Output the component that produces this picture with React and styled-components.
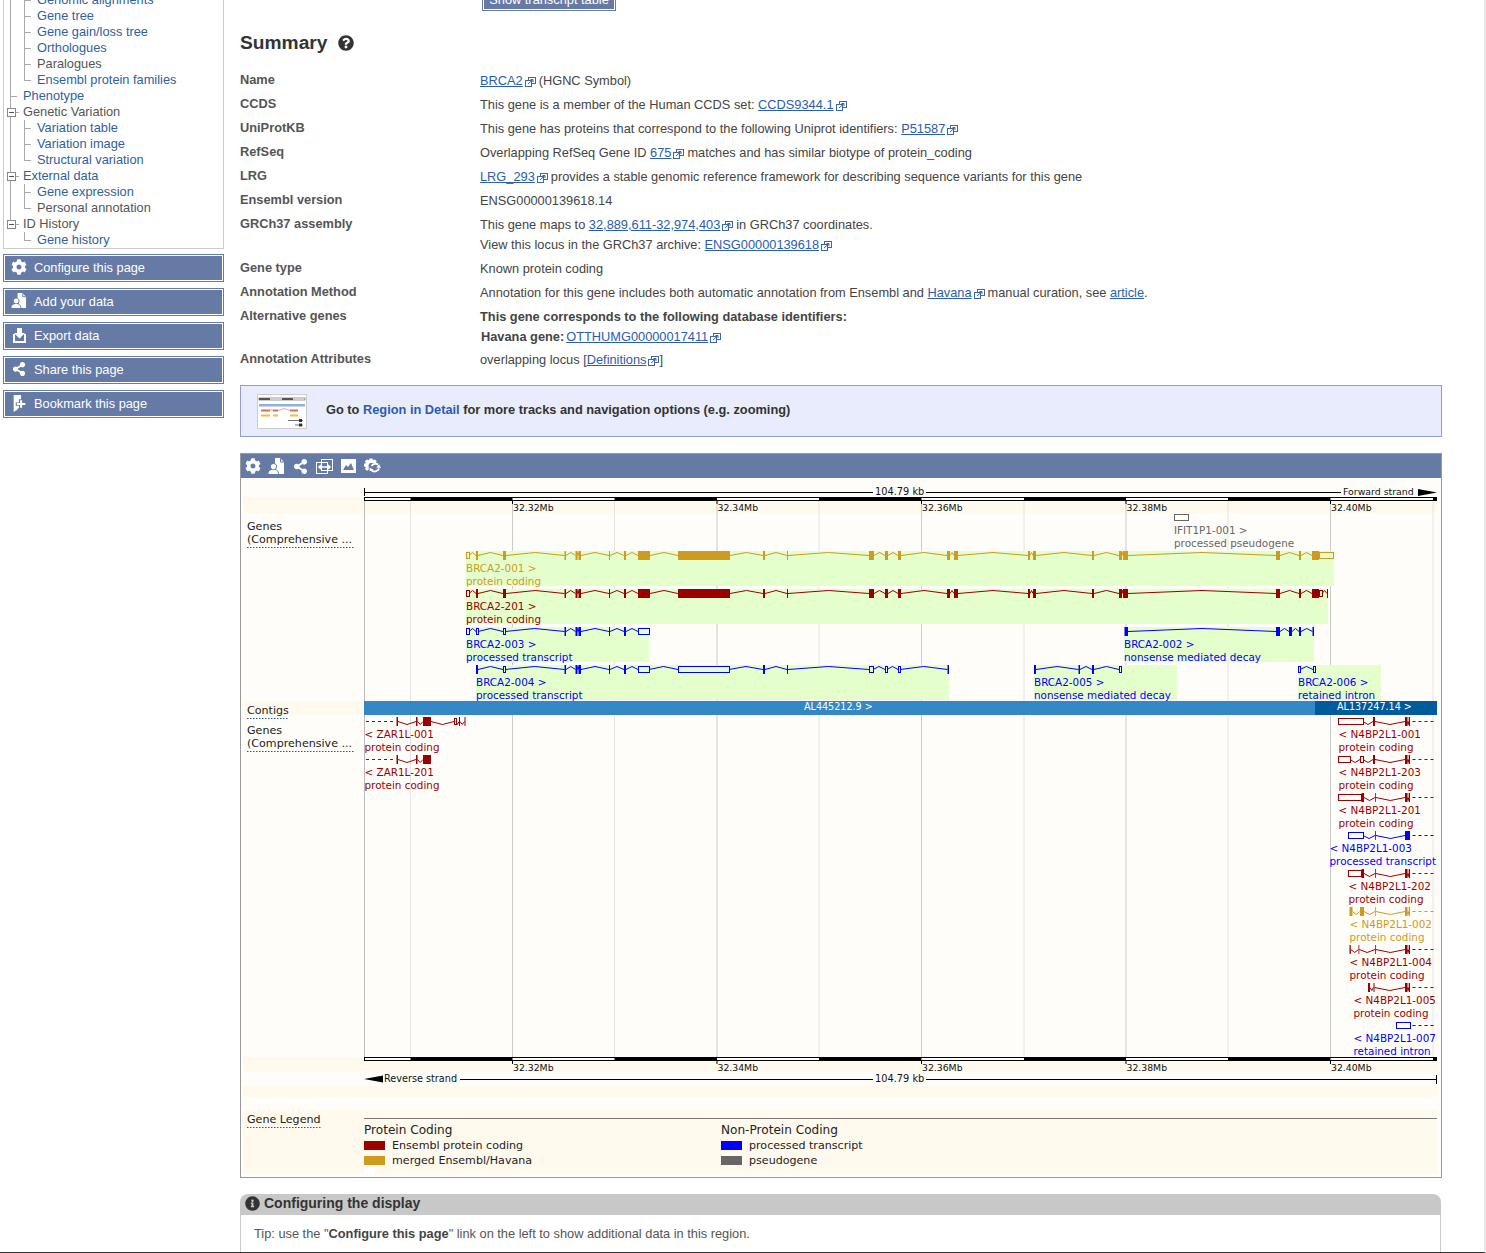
import React from "react";
import styled, { createGlobalStyle, css } from "styled-components";
import { FaCog, FaShareAlt, FaQuestionCircle, FaInfoCircle } from "react-icons/fa";

const GlobalStyle = createGlobalStyle`
  html, body { margin: 0; padding: 0; background: #fff; }
  body { font-family: "Liberation Sans", Arial, sans-serif; color: #444; }
`;

const LINK = "#2a5db0";
const TREE = "#a8a8a8";

const Page = styled.div`
  width: 1484px;
  height: 1252px;
  overflow: hidden;
  display: flex;
  align-items: flex-start;
  border-right: 2px solid #e6e6e6;
  border-bottom: 1px solid #333;
`;

const Sidebar = styled.aside`
  width: 221px;
  margin-left: 3px;
  flex: none;
`;

const TreePanel = styled.div`
  margin: -8px 0 -1px;
  border: 1px solid #ccc;
  border-top: 0;
`;

const lineV = (x, h = "100%") => `linear-gradient(${TREE}, ${TREE}) ${x}px 0 / 1px ${h} no-repeat`;
const lineH = (x, w = 7) => `linear-gradient(${TREE}, ${TREE}) ${x}px 8px / ${w}px 1px no-repeat`;

const TreeRow = styled.div`
  height: 16px;
  display: flex;
  align-items: center;
  font-size: 12.8px;
  line-height: 16px;
  white-space: nowrap;
  color: ${(p) => (p.$link ? "#2f5f9e" : "#555")};
  padding-left: ${(p) => (p.$toggle ? 3 : p.$level === 2 ? 33 : 19)}px;
  ${(p) => {
    const bits = [];
    if (p.$level === 1) {
      bits.push(lineV(6, p.$end ? "8px" : "100%"));
      if (!p.$toggle) bits.push(lineH(6));
    } else {
      if (p.$trunk) bits.push(lineV(6));
      bits.push(lineV(20, p.$last ? "8px" : "100%"), lineH(20));
    }
    return css`background: ${bits.join(", ")};`;
  }}
`;

const Toggle = styled.span`
  width: 7px;
  height: 7px;
  margin-right: 7px;
  border: 1px solid #888;
  background: linear-gradient(#555, #555) center / 5px 1px no-repeat, #fff;
  position: relative;
  &::after {
    content: "";
    position: absolute;
    left: 8px;
    top: 3px;
    width: 3px;
    height: 1px;
    background: ${TREE};
  }
`;

const SideButton = styled.div`
  height: 24px;
  padding-bottom: 2px;
  margin-top: 6px;
  display: flex;
  align-items: center;
  background: #667aa6;
  border: 1px solid #667aa6;
  box-shadow: inset 0 0 0 1px #fff;
  color: #fff;
  font-size: 12.8px;
  white-space: nowrap;
`;

const ButtonIcon = styled.span`
  width: 30px;
  display: flex;
  justify-content: center;
  color: #fff;
`;

const Main = styled.main`
  width: 1202px;
  margin-left: 16px;
  flex: none;
`;

const TopButton = styled.div`
  width: 132px;
  height: 27px;
  margin: -18px 0 0 242px;
  background: #667aa6;
  border: 1px solid #667aa6;
  box-shadow: inset 0 0 0 1px #fff;
  color: #fff;
  font-size: 12.8px;
  text-align: center;
  line-height: 34px;
`;

const Heading = styled.h2`
  margin: 20px 0 16px;
  height: 24px;
  display: flex;
  align-items: center;
  gap: 11px;
  font-size: 19.2px;
  font-weight: bold;
  color: #333;
  line-height: 24px;
`;

const InfoRow = styled.div`
  display: grid;
  grid-template-columns: 240px 1fr;
  padding-bottom: ${(p) => (p.$tight ? 3 : 4)}px;
  font-size: 12.8px;
  line-height: 20px;
`;

const RowLabel = styled.div`
  font-weight: bold;
  color: #555;
  margin-top: -1px;
`;

const RowLine = styled.div`
  color: #444;
  font-weight: ${(p) => (p.$bold ? "bold" : "normal")};
`;

const Link = styled.a`
  color: ${LINK};
  text-decoration: underline;
`;

const ExtIcon = styled.svg`
  width: 11px;
  height: 10px;
  margin: 0 3px 0 2px;
  vertical-align: -2px;
`;

const External = () => (
  <ExtIcon viewBox="0 0 11 10" fill="none" stroke="#3d66a8" strokeWidth="1">
    <rect x="3.5" y="0.5" width="7" height="6" fill="#fff" />
    <rect x="0.5" y="3.5" width="6" height="6" fill="#fff" />
    <path d="M3 7 L8 2.5 M5.5 2.5 H8 V5" />
  </ExtIcon>
);

const Ext = ({ children }) => (
  <>
    <Link>{children}</Link>
    <External />
  </>
);

const Closing = styled.span`
  margin-left: -3px;
`;

const Promo = styled.div`
  height: 50px;
  margin-top: 11px;
  display: flex;
  align-items: center;
  gap: 19px;
  padding-left: 16px;
  background: #e8ecfc;
  border: 1px solid #8ea0cb;
  font-size: 12.8px;
  font-weight: bold;
  color: #333;
`;

const PromoText = styled.span`
  margin-top: -4px;
`;

const Thumb = styled.svg`
  width: 50px;
  height: 35px;
  flex: none;
`;

const PromoLink = styled.span`
  color: ${LINK};
`;

const GenomePanel = styled.section`
  margin-top: 16px;
  border: 1px solid #999;
`;

const Toolbar = styled.div`
  height: 24px;
  display: flex;
  align-items: center;
  gap: 7px;
  padding-left: 3px;
  background: #667aa6;
  color: #fff;
`;

const ToolIcon = styled.span`
  width: 17px;
  display: flex;
  justify-content: center;
`;

const Track = styled.svg`
  display: block;
  width: 1200px;
  height: 699px;
`;

const Txt = styled.text`
  font-family: "DejaVu Sans", sans-serif;
  font-size: ${(p) => p.$size || 10.4}px;
`;

const ConfigPanel = styled.section`
  margin: 16px 1px 0 0;
`;

const ConfigHead = styled.div`
  height: 18px;
  padding: 0 0 3px 5px;
  display: flex;
  align-items: center;
  gap: 4px;
  background: #c8c8c8;
  border-radius: 8px 8px 0 0;
  font-size: 14px;
  font-weight: bold;
  color: #333;
`;

const ConfigBody = styled.div`
  border: 1px solid #ccc;
  border-top: 0;
  padding: 10px 13px 20px;
  font-size: 12.8px;
  line-height: 18px;
  color: #555;
`;

const Strong = styled.b`
  color: #444;
`;

const GeneTag = styled(Strong)`
  margin: 0 2px 0 1px;
`;

const treeRows = [
  { t: "Genomic alignments", l: 2, link: 1, trunk: 1 },
  { t: "Gene tree", l: 2, link: 1, trunk: 1 },
  { t: "Gene gain/loss tree", l: 2, link: 1, trunk: 1 },
  { t: "Orthologues", l: 2, link: 1, trunk: 1 },
  { t: "Paralogues", l: 2, trunk: 1 },
  { t: "Ensembl protein families", l: 2, link: 1, trunk: 1, last: 1 },
  { t: "Phenotype", l: 1, link: 1 },
  { t: "Genetic Variation", l: 1, toggle: 1 },
  { t: "Variation table", l: 2, link: 1, trunk: 1 },
  { t: "Variation image", l: 2, link: 1, trunk: 1 },
  { t: "Structural variation", l: 2, link: 1, trunk: 1, last: 1 },
  { t: "External data", l: 1, toggle: 1, link: 1 },
  { t: "Gene expression", l: 2, link: 1, trunk: 1 },
  { t: "Personal annotation", l: 2, trunk: 1, last: 1 },
  { t: "ID History", l: 1, toggle: 1, end: 1 },
  { t: "Gene history", l: 2, link: 1, last: 1 },
];

const AddDataIcon = ({ size = 17 }) => (
  <svg width={size} height={size} viewBox="0 0 17 17" fill="currentColor">
    <path d="M7 0 H12 L16 4 V16 H11 C11 13 9 12 8 11.5 C9.5 10 9.5 6.5 7 5.5 Z" />
    <path d="M12.5 0.5 V4 H16" fill="none" stroke="#667aa6" />
    <circle cx="5.5" cy="8.5" r="2.6" />
    <path d="M0.5 16 C0.5 12.5 3 11.8 5.5 11.8 C8 11.8 10 12.5 10 16 Z" />
  </svg>
);
const ExportIcon = () => (
  <svg width="15" height="15" viewBox="0 0 15 15" fill="currentColor">
    <path d="M5 0 H10 V5 H13 L7.5 10.5 L2 5 H5 Z" />
    <path d="M1 6 H3 V13 H12 V6 H14 V15 H1 Z" />
  </svg>
);
const BookmarkIcon = () => (
  <svg width="17" height="17" viewBox="0 0 15 16" fill="currentColor">
    <path d="M2 0 H9 V4 H7 V7 H4 V10 H7 V12 L5 14 L2 16 Z" />
    <path d="M8 5 H10 V7.5 H13 V9.5 H10 V12 H8 V9.5 H5 V7.5 H8 Z" />
  </svg>
);
const RegionIcon = () => (
  <svg width="17" height="15" viewBox="0 0 17 15" fill="none" stroke="currentColor">
    <rect x="0.5" y="3.5" width="11" height="11" />
    <rect x="5.5" y="0.5" width="11" height="11" />
    <path d="M3 8 H14 M5 6 L3 8 L5 10 M12 6 L14 8 L12 10" strokeWidth="1.5" />
  </svg>
);
const ImageIcon = () => (
  <svg width="15" height="14" viewBox="0 0 15 14">
    <rect width="15" height="14" fill="#fff" />
    <path d="M2 11 L5 6 L7 8 L10 4 L13 11 Z" fill="#667aa6" />
  </svg>
);
const RefreshGearIcon = () => (
  <svg width="18" height="17" viewBox="0 0 18 17" fill="currentColor">
    <path d="M6 0 H9 L9.5 2 L11.5 1.2 L13.5 3 L12.5 5 H9 A3 3 0 0 0 5 9 V12 L3 13 L1 11 L2 9 L0 8.5 V5.5 L2 5 L1 3 L3 1 L5 2 Z" />
    <path d="M7.5 12 A5 5 0 0 0 16 10.5 M15 6.5 A5 5 0 0 0 8 8" fill="none" stroke="currentColor" strokeWidth="2" />
    <path d="M16 6 L18 10 L13 9.5 Z M6 13.5 L6 9.5 L10 12 Z" />
  </svg>
);

const GOLD = "#cd9b1d";
const RED = "#9b0000";
const BLUE = "#0000ff";
const GREY = "#666";

// [start, end, "o" for an open box]
const EX_START = [[476, 478], [503, 506], [564.5, 566], [575.5, 577.5], [578.5, 581], [609, 610], [624, 626]];
const EX_MID = [[763, 765], [787, 788], [869, 874], [885, 888], [898, 901], [947, 950], [954, 958], [1028, 1030], [1033, 1036], [1092, 1094], [1119, 1122], [1123, 1128]];
const EX_END = [[1276, 1280], [1299, 1301]];

const forwardGenes = [
  {
    y: 555.5, c: GOLD, g: [466, 551, 868], name: "BRCA2-001 >", kind: "protein coding", tx: 466,
    ex: [[466, 469, "o"], ...EX_START, [638, 650], [678, 730], ...EX_MID, ...EX_END, [1312, 1319], [1319, 1333, "o"]],
  },
  {
    y: 593.5, c: RED, g: [466, 589, 862], name: "BRCA2-201 >", kind: "protein coding", tx: 466,
    ex: [[466, 469, "o"], ...EX_START, [638, 650], [678, 730], ...EX_MID, ...EX_END, [1312, 1319], [1319, 1322, "o"], [1327, 1328]],
  },
  {
    y: 631.5, c: BLUE, g: [466, 627, 183], name: "BRCA2-003 >", kind: "processed transcript", tx: 466,
    ex: [[466, 469, "o"], [476, 478, "o"], [503, 505, "o"], [564.5, 566], [575.5, 577.5], [578.5, 581], [609, 610], [624, 626], [638, 649, "o"]],
  },
  {
    y: 631.5, c: BLUE, g: [1124, 627, 190], name: "BRCA2-002 >", kind: "nonsense mediated decay", tx: 1124,
    ex: [[1124.5, 1128], [1276, 1280], [1289, 1292], [1299, 1301], [1312.5, 1314]],
  },
  {
    y: 669.5, c: BLUE, g: [476, 665, 473], name: "BRCA2-004 >", kind: "processed transcript", tx: 476,
    ex: [[476, 478], [503, 505, "o"], [564.5, 566], [575.5, 577.5], [578.5, 581], [609, 610], [624, 626], [638, 649, "o"], [678, 729, "o"], [763, 765], [787, 788], [869, 873, "o"], [885, 887, "o"], [898, 900, "o"], [947.5, 949]],
  },
  {
    y: 669.5, c: BLUE, g: [1034, 665, 143], name: "BRCA2-005 >", kind: "nonsense mediated decay", tx: 1034,
    ex: [[1034, 1036], [1078.5, 1080], [1092, 1094], [1119, 1121, "o"]],
  },
  {
    y: 669.5, c: BLUE, g: [1298, 665, 83], name: "BRCA2-006 >", kind: "retained intron", tx: 1298,
    ex: [[1298, 1300, "o"], [1313, 1315, "o"]],
  },
];

const TAIL = [[1405, 1407.5], [1408.7, 1410]];
const reverseGenes = [
  { y: 721.5, c: RED, name: "< ZAR1L-001", kind: "protein coding", tx: 364.5, dash: [366, 396], ex: [[396.5, 398], [416, 417.5], [423, 431], [454, 456, "o"], [459, 460], [464.5, 465.5]] },
  { y: 759.5, c: RED, name: "< ZAR1L-201", kind: "protein coding", tx: 364.5, dash: [366, 396], ex: [[396.5, 398], [416, 417.5], [423, 431]] },
  { y: 721.5, c: RED, name: "< N4BP2L1-001", kind: "protein coding", tx: 1338.5, dash: [1412.5, 1434], ex: [[1338, 1363, "o"], [1373, 1375], ...TAIL] },
  { y: 759.5, c: RED, name: "< N4BP2L1-203", kind: "protein coding", tx: 1338.5, dash: [1412.5, 1434], ex: [[1338, 1350, "o"], [1360, 1363, "o"], [1373, 1375], ...TAIL] },
  { y: 797.5, c: RED, name: "< N4BP2L1-201", kind: "protein coding", tx: 1338.5, dash: [1412.5, 1434], ex: [[1338, 1361, "o"], [1361.5, 1364], [1375, 1375.8], ...TAIL] },
  { y: 835.5, c: BLUE, name: "< N4BP2L1-003", kind: "processed transcript", tx: 1329.5, dash: [1412.5, 1434], ex: [[1348, 1363, "o"], [1375, 1375.8], [1405, 1410]] },
  { y: 873.5, c: RED, name: "< N4BP2L1-202", kind: "protein coding", tx: 1348.5, dash: [1412.5, 1434], ex: [[1348, 1361, "o"], [1361.5, 1364], [1375, 1375.8], ...TAIL] },
  { y: 911.5, c: GOLD, name: "< N4BP2L1-002", kind: "protein coding", tx: 1349.5, dash: [1412.5, 1434], ex: [[1349.5, 1352.5], [1360, 1364], [1375, 1375.8], ...TAIL] },
  { y: 949.5, c: RED, name: "< N4BP2L1-004", kind: "protein coding", tx: 1349.5, dash: [1412.5, 1434], ex: [[1349.5, 1350.8], [1358.5, 1359.3], [1375, 1375.8], ...TAIL] },
  { y: 987.5, c: RED, name: "< N4BP2L1-005", kind: "protein coding", tx: 1353.5, dash: [1412.5, 1434], ex: [[1368, 1370], [1373.5, 1374.5], ...TAIL] },
  { y: 1025.5, c: BLUE, name: "< N4BP2L1-007", kind: "retained intron", tx: 1353.5, dash: [1412.5, 1434], ex: [[1396, 1410, "o"]] },
];

const Gene = ({ g, dir = -3, textDy = 16.5 }) => (
  <g>
    {g.ex.map(([a], i) => {
      if (i === 0) return null;
      const prev = g.ex[i - 1][1];
      if (a - prev < 1) return null;
      return (
        <polyline
          key={"i" + i}
          points={`${prev},${g.y} ${(prev + a) / 2},${g.y + dir} ${a},${g.y}`}
          fill="none"
          stroke={g.c}
          strokeWidth="1"
        />
      );
    })}
    {g.ex.map(([a, b, o], i) =>
      o ? (
        <rect key={i} x={a + 0.5} y={g.y - 3} width={b - a} height={6} fill="none" stroke={g.c} strokeWidth="1" />
      ) : (
        <rect key={i} x={a} y={g.y - 4.5} width={b - a} height={9} fill={g.c} />
      )
    )}
    {g.dash && (
      <line x1={g.dash[0]} x2={g.dash[1]} y1={g.y} y2={g.y} stroke={g.c} strokeDasharray="3 3" />
    )}
    <Txt x={g.tx} y={g.y + textDy} fill={g.c}>{g.name}</Txt>
    <Txt x={g.tx} y={g.y + textDy + 13} fill={g.c}>{g.kind}</Txt>
  </g>
);

const MAJOR = [512.5, 717, 921.5, 1126, 1330.5];
const MINOR = [410.5, 614.5, 819, 1024, 1228, 1433];
const BREAKS = [364, 410.5, 512.5, 614.5, 717, 819, 921.5, 1024, 1126, 1228, 1330.5, 1433, 1437];
const MB = ["32.32Mb", "32.34Mb", "32.36Mb", "32.38Mb", "32.40Mb"];

const ScaleBar = ({ y, labelY }) => (
  <g>
    <rect x="364.5" y={y + 0.5} width="1072" height="3" fill="#fff" stroke="#000" />
    {BREAKS.slice(0, -1).map((x, i) =>
      i % 2 ? <rect key={x} x={x} y={y} width={BREAKS[i + 1] - x} height="4" fill="#000" /> : null
    )}
    {MAJOR.map((x, i) => (
      <g key={x}>
        <line x1={x} x2={x} y1={y + 3} y2={y + 7} stroke="#000" />
        <Txt $size={9.3} x={x + 0.5} y={labelY} fill="#111">{MB[i]}</Txt>
      </g>
    ))}
  </g>
);

const TrackLabel = ({ x = 247, y, lines, width }) => (
  <g>
    {lines.map((l, i) => (
      <Txt key={l} $size={11.1} x={x} y={y + i * 13} fill="#222">{l}</Txt>
    ))}
    <line x1={x} x2={x + width} y1={y + (lines.length - 1) * 13 + 4.5} y2={y + (lines.length - 1) * 13 + 4.5} stroke="#2458a8" strokeDasharray="1.5 1.5" />
  </g>
);

const GenomeImage = () => (
  <Track viewBox="241 478 1200 699">
    <rect x="241" y="478" width="1200" height="699" fill="#fffdf9" />
    <rect x="243" y="497" width="1194" height="16" fill="#fff9ee" />
    <rect x="243" y="701" width="121" height="14" fill="#fff9ee" />
    <rect x="243" y="1057" width="1194" height="15" fill="#fff9ee" />
    <rect x="243" y="1086" width="1194" height="11" fill="#fff9ee" />
    <rect x="243" y="1110" width="1194" height="64" fill="#fff9ee" />

    {MINOR.map((x) => <line key={x} x1={x} x2={x} y1="500" y2="1057" stroke="#e4e4e2" />)}
    {MAJOR.map((x) => <line key={x} x1={x} x2={x} y1="500" y2="1057" stroke="#cbcbcb" />)}
    <line x1="364.5" x2="364.5" y1="500" y2="1057" stroke="#bbb" />

    <line x1="364.5" x2="364.5" y1="488" y2="496" stroke="#000" />
    <line x1="364" x2="873" y1="492.5" y2="492.5" stroke="#000" />
    <Txt $size={9.8} x="875" y="495" fill="#111">104.79 kb</Txt>
    <line x1="926" x2="1341" y1="492.5" y2="492.5" stroke="#000" />
    <Txt $size={9.4} x="1343" y="495" fill="#111">Forward strand</Txt>
    <path d="M1418 489 L1437 492.5 L1418 496 Z" fill="#000" />

    <ScaleBar y={497} labelY={511} />

    <TrackLabel y={530} lines={["Genes", "(Comprehensive ..."]} width={107} />

    <rect x="1174.5" y="514.5" width="14" height="6" fill="none" stroke={GREY} />
    <Txt x="1174" y="534" fill={GREY}>IFIT1P1-001 &gt;</Txt>
    <Txt x="1174" y="547" fill={GREY}>processed pseudogene</Txt>

    {forwardGenes.map((g) => (
      <rect key={g.name} x={g.g[0]} y={g.g[1]} width={g.g[2]} height="35" fill="#e5ffcc" />
    ))}
    {forwardGenes.map((g) => <Gene key={g.name} g={g} />)}

    <rect x="364" y="701" width="951" height="14" fill="#3388c5" />
    <rect x="1315" y="701" width="122" height="14" fill="#005a9c" />
    <Txt $size={9.6} x="804" y="710" fill="#fff">AL445212.9 &gt;</Txt>
    <Txt $size={9.6} x="1337" y="710" fill="#fff">AL137247.14 &gt;</Txt>
    <TrackLabel y={714} lines={["Contigs"]} width={42} />

    <TrackLabel y={734} lines={["Genes", "(Comprehensive ..."]} width={107} />
    {reverseGenes.map((g) => <Gene key={g.name} g={g} dir={3} textDy={16} />)}

    <ScaleBar y={1057} labelY={1071} />

    <path d="M364 1079 L383 1075.5 V1082.5 Z" fill="#000" />
    <Txt $size={9.7} x="384" y="1082" fill="#111">Reverse strand</Txt>
    <line x1="460" x2="873" y1="1079.5" y2="1079.5" stroke="#000" />
    <Txt $size={9.8} x="875" y="1082" fill="#111">104.79 kb</Txt>
    <line x1="926" x2="1437" y1="1079.5" y2="1079.5" stroke="#000" />
    <line x1="1436.5" x2="1436.5" y1="1075" y2="1084" stroke="#000" />

    <TrackLabel y={1123} lines={["Gene Legend"]} width={74} />
    <line x1="364" x2="1437" y1="1118.5" y2="1118.5" stroke="#777" />
    <Txt $size={12.1} x="364" y="1134" fill="#222">Protein Coding</Txt>
    <rect x="364" y="1141" width="21" height="9" fill={RED} />
    <Txt $size={11.1} x="392" y="1149" fill="#222">Ensembl protein coding</Txt>
    <rect x="364" y="1156" width="21" height="9" fill={GOLD} />
    <Txt $size={11.1} x="392" y="1164" fill="#222">merged Ensembl/Havana</Txt>
    <rect x="364" y="1168" width="11" height="6" fill="#fff" />
    <Txt $size={12.1} x="721" y="1134" fill="#222">Non-Protein Coding</Txt>
    <rect x="721" y="1141" width="21" height="9" fill={BLUE} />
    <Txt $size={11.1} x="749" y="1149" fill="#222">processed transcript</Txt>
    <rect x="721" y="1156" width="21" height="9" fill={GREY} />
    <Txt $size={11.1} x="749" y="1164" fill="#222">pseudogene</Txt>
  </Track>
);

export default function App() {
  return (
    <>
      <GlobalStyle />
      <Page>
        <Sidebar>
          <TreePanel>
            {treeRows.map((r) => (
              <TreeRow
                key={r.t}
                $level={r.l}
                $link={r.link}
                $toggle={r.toggle}
                $trunk={r.trunk}
                $last={r.last}
                $end={r.end}
              >
                {r.toggle && <Toggle />}
                {r.t}
              </TreeRow>
            ))}
          </TreePanel>
          <SideButton><ButtonIcon><FaCog size={16} /></ButtonIcon>Configure this page</SideButton>
          <SideButton><ButtonIcon><AddDataIcon size={16} /></ButtonIcon>Add your data</SideButton>
          <SideButton><ButtonIcon><ExportIcon /></ButtonIcon>Export data</SideButton>
          <SideButton><ButtonIcon><FaShareAlt size={14} /></ButtonIcon>Share this page</SideButton>
          <SideButton><ButtonIcon><BookmarkIcon /></ButtonIcon>Bookmark this page</SideButton>
        </Sidebar>

        <Main>
          <TopButton>Show transcript table</TopButton>
          <Heading>Summary <FaQuestionCircle size={16} color="#333" /></Heading>

          <InfoRow>
            <RowLabel>Name</RowLabel>
            <RowLine><Ext>BRCA2</Ext>(HGNC Symbol)</RowLine>
          </InfoRow>
          <InfoRow>
            <RowLabel>CCDS</RowLabel>
            <RowLine>This gene is a member of the Human CCDS set: <Ext>CCDS9344.1</Ext></RowLine>
          </InfoRow>
          <InfoRow>
            <RowLabel>UniProtKB</RowLabel>
            <RowLine>This gene has proteins that correspond to the following Uniprot identifiers: <Ext>P51587</Ext></RowLine>
          </InfoRow>
          <InfoRow>
            <RowLabel>RefSeq</RowLabel>
            <RowLine>Overlapping RefSeq Gene ID <Ext>675</Ext>matches and has similar biotype of protein_coding</RowLine>
          </InfoRow>
          <InfoRow>
            <RowLabel>LRG</RowLabel>
            <RowLine><Ext>LRG_293</Ext>provides a stable genomic reference framework for describing sequence variants for this gene</RowLine>
          </InfoRow>
          <InfoRow>
            <RowLabel>Ensembl version</RowLabel>
            <RowLine>ENSG00000139618.14</RowLine>
          </InfoRow>
          <InfoRow>
            <RowLabel>GRCh37 assembly</RowLabel>
            <div>
              <RowLine>This gene maps to <Ext>32,889,611-32,974,403</Ext>in GRCh37 coordinates.</RowLine>
              <RowLine>View this locus in the GRCh37 archive: <Ext>ENSG00000139618</Ext></RowLine>
            </div>
          </InfoRow>
          <InfoRow>
            <RowLabel>Gene type</RowLabel>
            <RowLine>Known protein coding</RowLine>
          </InfoRow>
          <InfoRow>
            <RowLabel>Annotation Method</RowLabel>
            <RowLine>Annotation for this gene includes both automatic annotation from Ensembl and <Ext>Havana</Ext>manual curation, see <Link>article</Link>.</RowLine>
          </InfoRow>
          <InfoRow $tight>
            <RowLabel>Alternative genes</RowLabel>
            <div>
              <RowLine $bold>This gene corresponds to the following database identifiers:</RowLine>
              <RowLine><GeneTag>Havana gene:</GeneTag><Ext>OTTHUMG00000017411</Ext></RowLine>
            </div>
          </InfoRow>
          <InfoRow>
            <RowLabel>Annotation Attributes</RowLabel>
            <RowLine>overlapping locus [<Ext>Definitions</Ext><Closing>]</Closing></RowLine>
          </InfoRow>

          <Promo>
            <Thumb viewBox="0 0 50 35">
              <rect x="0.5" y="0.5" width="49" height="34" fill="#fff" stroke="#ccc" />
              <rect x="2" y="4" width="46" height="2" fill="#fff" stroke="#555" strokeWidth="0.6" />
              <rect x="2" y="4" width="11" height="2" fill="#555" />
              <rect x="25" y="4" width="11" height="2" fill="#555" />
              <rect x="2" y="10" width="46" height="2.5" fill="#8fb0e0" />
              <path d="M4 16.5 H13 M16 16.5 H21 M33 16.5 H41" stroke="#d86b5a" strokeWidth="2" />
              <path d="M13 16.5 L14.5 15.5 L16 16.5 M21 16.5 L27 14.5 L33 16.5" stroke="#d86b5a" strokeWidth="0.6" fill="none" />
              <path d="M4 21.5 H13 M16 21.5 H21 M33 21.5 H41" stroke="#f0c030" strokeWidth="2" />
              <path d="M31 26.5 H46 M38 31 H46" stroke="#333" strokeWidth="0.7" />
              <rect x="42" y="25" width="3" height="3" fill="#333" />
              <rect x="42" y="29.5" width="3" height="3" fill="#333" />
            </Thumb>
            <PromoText>Go to <PromoLink>Region in Detail</PromoLink> for more tracks and navigation options (e.g. zooming)</PromoText>
          </Promo>

          <GenomePanel>
            <Toolbar>
              <ToolIcon><FaCog size={16} /></ToolIcon>
              <ToolIcon><AddDataIcon /></ToolIcon>
              <ToolIcon><FaShareAlt size={15} /></ToolIcon>
              <ToolIcon><RegionIcon /></ToolIcon>
              <ToolIcon><ImageIcon /></ToolIcon>
              <ToolIcon><RefreshGearIcon /></ToolIcon>
            </Toolbar>
            <GenomeImage />
          </GenomePanel>

          <ConfigPanel>
            <ConfigHead><FaInfoCircle size={15} color="#333" />Configuring the display</ConfigHead>
            <ConfigBody>Tip: use the "<Strong>Configure this page</Strong>" link on the left to show additional data in this region.</ConfigBody>
          </ConfigPanel>
        </Main>
      </Page>
    </>
  );
}
